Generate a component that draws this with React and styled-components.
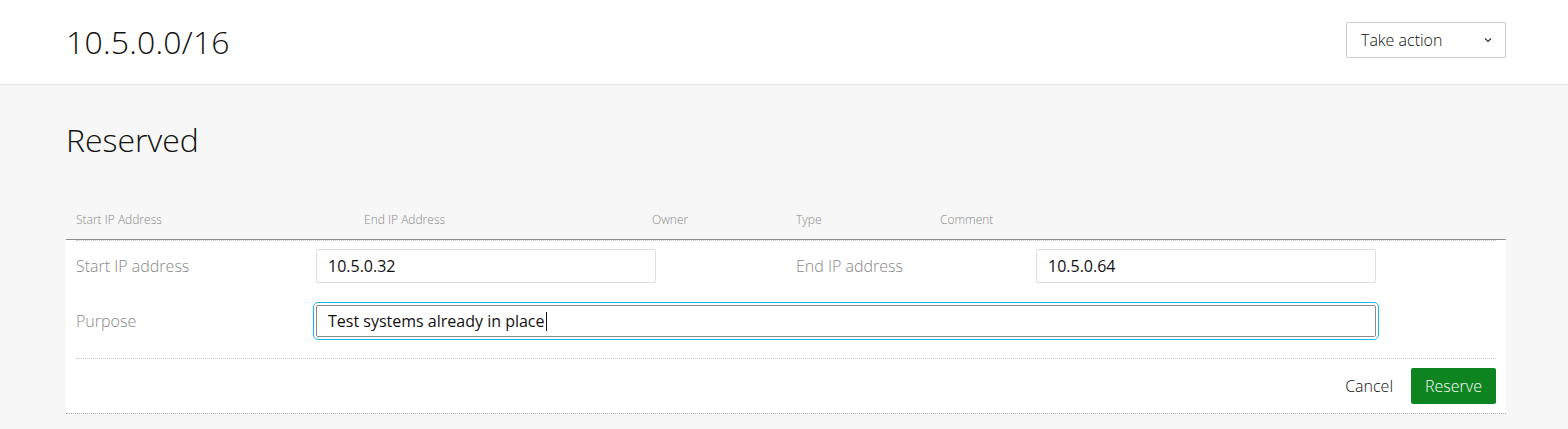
import styled, { createGlobalStyle } from "styled-components";

const GlobalStyle = createGlobalStyle`
  * { box-sizing: border-box; }
  body {
    margin: 0;
    background: #f7f7f7;
    font-family: "Open Sans", "Noto Sans", sans-serif;
    font-weight: 300;
    color: #111;
  }
`;

const columns = [
  { label: "Start IP Address", width: "20%" },
  { label: "End IP Address", width: "20%" },
  { label: "Owner", width: "10%" },
  { label: "Type", width: "10%" },
  { label: "Comment", width: "40%" },
];

export default function App() {
  return (
    <>
      <GlobalStyle />
      <Header>
        <Title>10.5.0.0/16</Title>
        <ActionButton type="button">
          <span>Take action</span>
          <svg width="10" height="6" viewBox="0 0 10 6">
            <path d="M2 1.5 L5 4.5 L8 1.5" fill="none" stroke="#333" strokeWidth="1.2" />
          </svg>
        </ActionButton>
      </Header>

      <Main>
        <Heading>Reserved</Heading>

        <Table>
          <HeadRow>
            {columns.map((c) => (
              <HeadCell key={c.label} style={{ width: c.width }}>
                {c.label}
              </HeadCell>
            ))}
          </HeadRow>

          <FormPanel>
            <FormGrid>
              <Label>Start IP address</Label>
              <Input defaultValue="10.5.0.32" />
              <span />
              <Label>End IP address</Label>
              <Input defaultValue="10.5.0.64" />
              <span />

              <Label>Purpose</Label>
              <FocusedField>
                Test systems already in place
                <Caret />
              </FocusedField>
              <span />
            </FormGrid>

            <Actions>
              <CancelButton type="button">Cancel</CancelButton>
              <ReserveButton type="button">Reserve</ReserveButton>
            </Actions>
          </FormPanel>
        </Table>
      </Main>
    </>
  );
}

const Header = styled.header`
  height: 85px;
  background: #fff;
  border-bottom: 1px solid #e4e4e4;
  display: flex;
  align-items: center;
  justify-content: space-between;
  padding: 0 62px 0 66px;
`;

const Title = styled.h1`
  margin: 0 0 2px;
  font-size: 32px;
  font-weight: 300;
  letter-spacing: 0.2px;
  color: #111;
`;

const ActionButton = styled.button`
  width: 160px;
  height: 36px;
  margin-top: -4px;
  background: #fff;
  border: 1px solid #cdcdcd;
  border-radius: 2px;
  display: flex;
  align-items: center;
  justify-content: space-between;
  padding: 0 12px 0 14px;
  font-family: inherit;
  font-weight: 300;
  font-size: 16px;
  color: #111;
`;

const Main = styled.main`
  padding: 36px 62px 0 66px;
`;

const Heading = styled.h2`
  margin: 0;
  font-size: 32px;
  font-weight: 300;
  color: #111;
  line-height: 1.2;
`;

const Table = styled.section`
  margin-top: 44px;
`;

const HeadRow = styled.div`
  display: flex;
  border-bottom: 1px solid #8c8c8c;
  height: 37px;
`;

const HeadCell = styled.div`
  padding: 8px 10px 0;
  font-size: 12px;
  color: #888;
`;

const FormPanel = styled.div`
  background: #fff;
  border-bottom: 1px dotted #a8a8a8;
  padding: 0 10px 9px;
`;

const FormGrid = styled.div`
  display: grid;
  grid-template-columns: 240px 340px 140px 240px 340px 1fr;
  row-gap: 19px;
  align-items: center;
  padding: 8px 0 18px;
  border-top: 1px dotted #c8c8c8;
  border-bottom: 1px dotted #c8c8c8;
`;

const Label = styled.label`
  font-size: 16px;
  color: #888;
`;

const Input = styled.input`
  width: 100%;
  height: 34px;
  padding: 0 11px;
  border: 1px solid #dedede;
  border-radius: 2px;
  font-family: inherit;
  font-weight: 400;
  font-size: 16px;
  color: #111;
  background: #fff;
  outline: none;
`;

const FocusedField = styled.div`
  grid-column: 2 / 6;
  height: 32px;
  margin: 3px 0;
  display: flex;
  align-items: center;
  padding: 0 11px;
  border: 1px solid #8a8a8a;
  border-radius: 2px;
  outline: 1px solid #19b6ee;
  outline-offset: 2px;
  font-weight: 400;
  font-size: 16px;
  color: #111;
  background: #fff;
`;

const Caret = styled.span`
  width: 1px;
  height: 19px;
  margin-left: 1px;
  background: #111;
`;

const Actions = styled.div`
  display: flex;
  justify-content: flex-end;
  align-items: center;
  gap: 18px;
  padding-top: 9px;
`;

const CancelButton = styled.button`
  background: none;
  border: none;
  padding: 0;
  font-family: inherit;
  font-weight: 300;
  font-size: 16px;
  color: #111;
`;

const ReserveButton = styled.button`
  width: 85px;
  height: 36px;
  background: #0e8420;
  border: none;
  border-radius: 2px;
  font-family: inherit;
  font-weight: 300;
  font-size: 16px;
  color: #fff;
`;
